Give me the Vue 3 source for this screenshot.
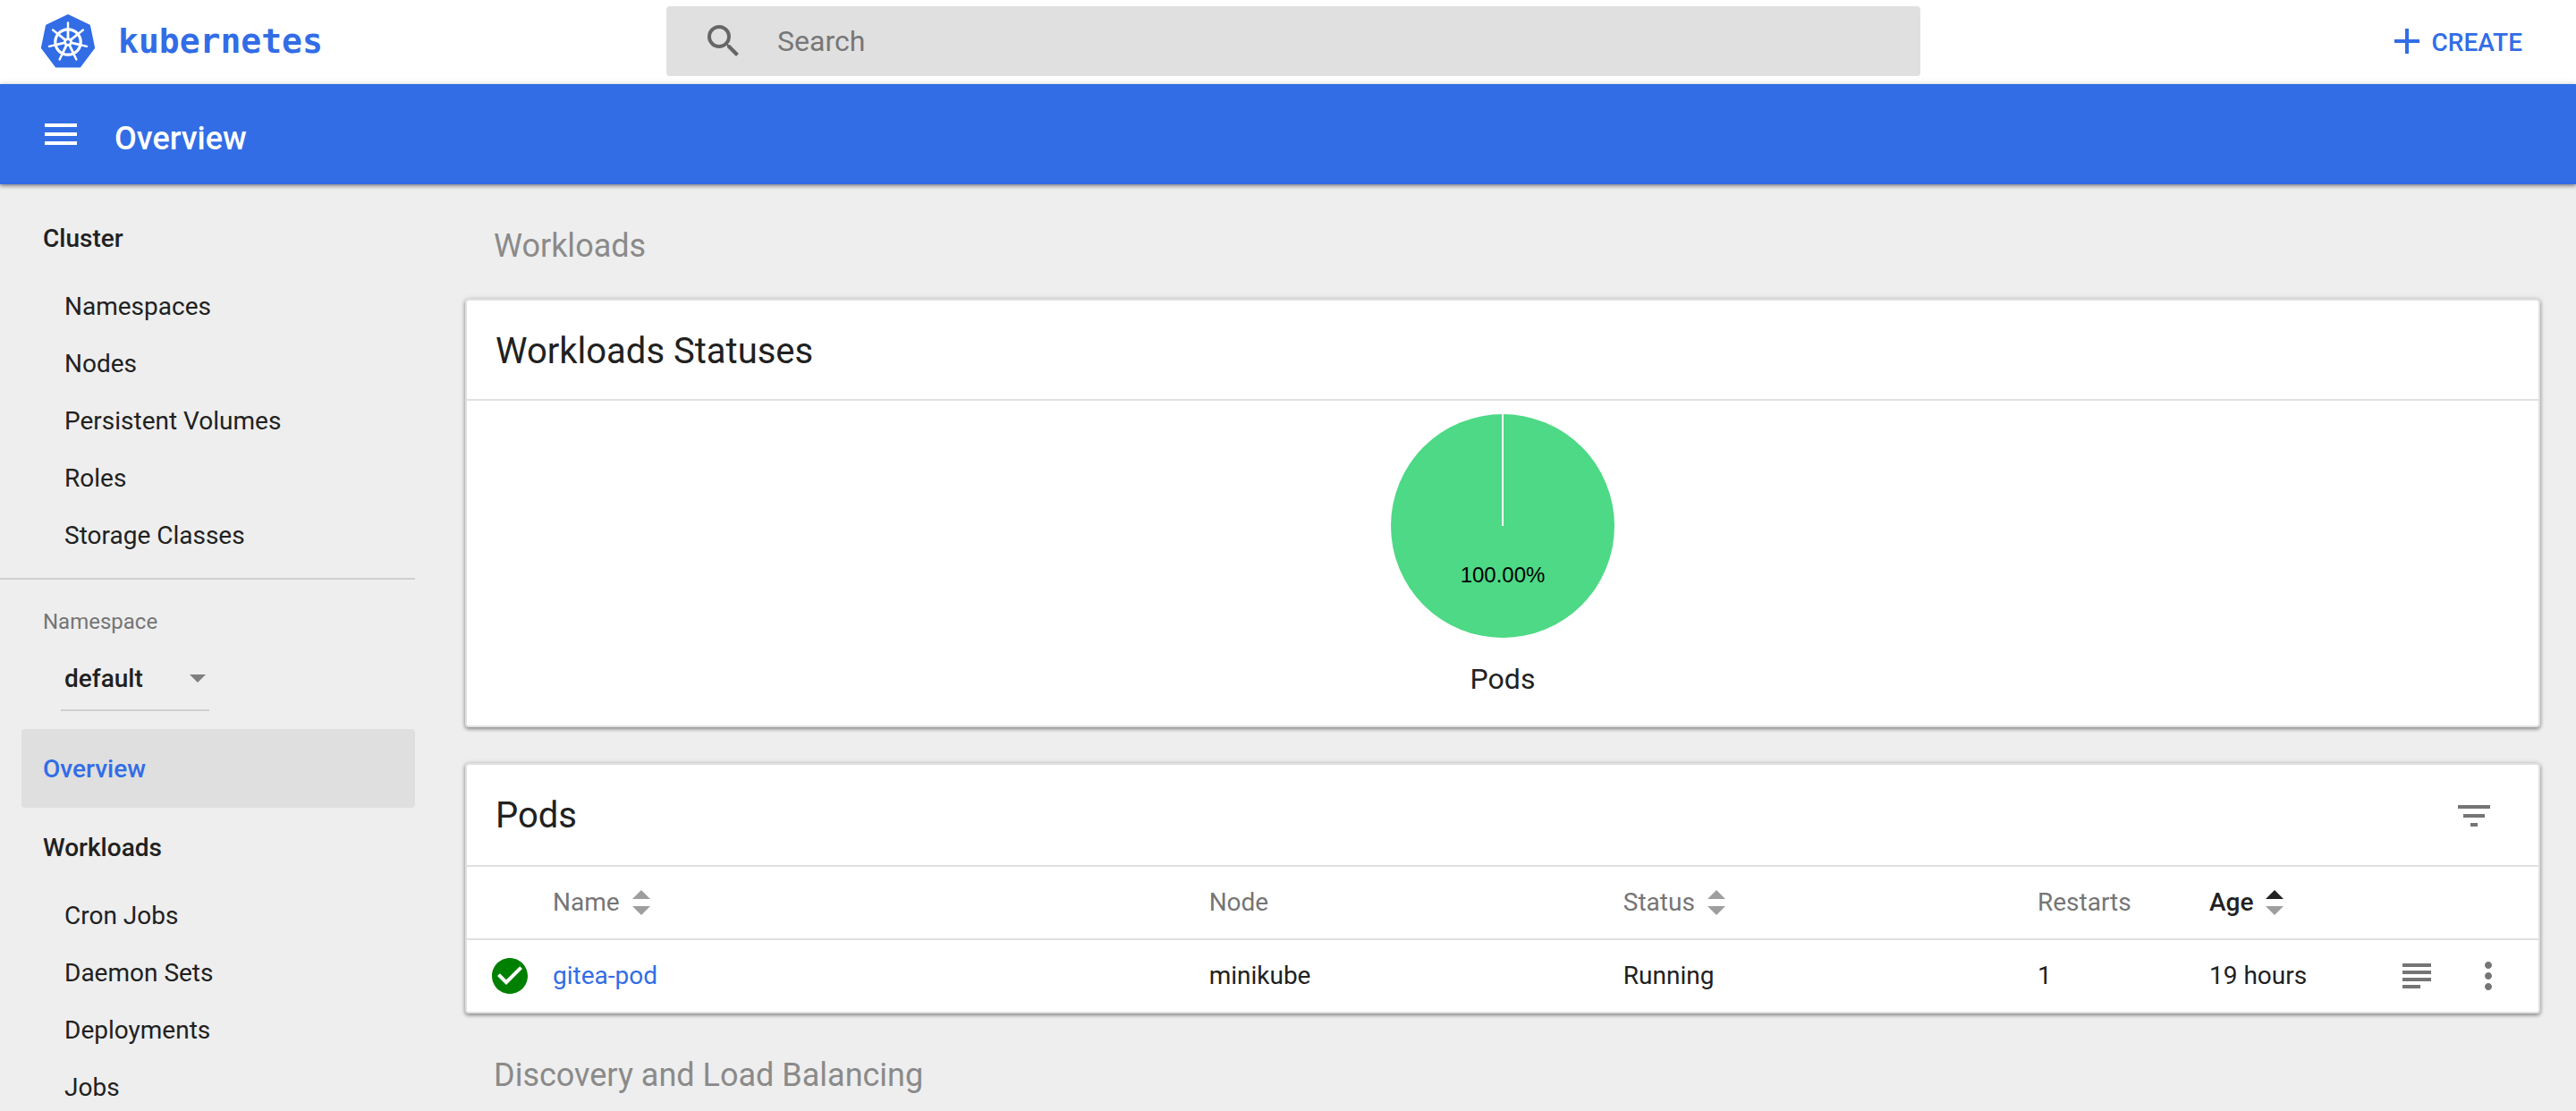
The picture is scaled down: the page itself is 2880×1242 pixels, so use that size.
<script setup>
import { ref } from 'vue'

const clusterItems = ['Namespaces', 'Nodes', 'Persistent Volumes', 'Roles', 'Storage Classes']
const workloadItems = ['Cron Jobs', 'Daemon Sets', 'Deployments', 'Jobs']
const namespace = ref('default')
const query = ref('')
const pods = [{ name: 'gitea-pod', node: 'minikube', status: 'Running', restarts: 1, age: '19 hours' }]

// One spoke of the wheel for each side of the heptagon
const spokes = Array.from({ length: 7 }, (_, i) => (i * 360) / 7)
</script>

<template>
  <div class="app">
    <header class="top">
      <a class="brand" href="#">
        <svg class="logo" viewBox="0 0 60 60" aria-hidden="true">
          <path
            d="M30 1.5 L53.5 12.8 L58.6 37.3 L43 58 L17 58 L1.4 37.3 L6.5 12.8 Z"
            fill="#326de6" stroke="#326de6" stroke-width="3" stroke-linejoin="round"
          />
          <g fill="none" stroke="#fff">
            <circle cx="30" cy="31" r="14.2" stroke-width="3.2" />
            <g v-for="a in spokes" :key="a" :transform="`rotate(${a} 30 31)`">
              <path d="M30 9.4V17" stroke-width="2.4" stroke-linecap="round" />
              <path d="M30 17V28" stroke-width="2.8" />
            </g>
          </g>
          <circle cx="30" cy="31" r="4.8" fill="#fff" />
          <circle cx="30" cy="31" r="2" fill="#326de6" />
        </svg>
        <span class="wordmark">kubernetes</span>
      </a>
      <label class="search">
        <svg class="icon" viewBox="0 0 24 24" aria-hidden="true">
          <path d="M15.5 14h-.79l-.28-.27A6.47 6.47 0 0 0 16 9.5 6.5 6.5 0 1 0 9.5 16c1.61 0 3.09-.59 4.23-1.57l.27.28v.79l5 4.99L20.49 19l-4.99-5zm-6 0C7.01 14 5 11.99 5 9.5S7.01 5 9.5 5 14 7.01 14 9.5 11.99 14 9.5 14z" />
        </svg>
        <input v-model="query" type="text" placeholder="Search" aria-label="Search" />
      </label>
      <button class="create" type="button">
        <svg class="icon" viewBox="0 0 24 24" aria-hidden="true"><path d="M19 13h-6v6h-2v-6H5v-2h6V5h2v6h6v2z" /></svg>
        <span>CREATE</span>
      </button>
    </header>

    <div class="bar">
      <button class="icon-button" type="button" aria-label="Toggle navigation">
        <svg class="icon" viewBox="0 0 24 24" aria-hidden="true"><path d="M3 18h18v-2H3v2zm0-5h18v-2H3v2zm0-7v2h18V6H3z" /></svg>
      </button>
      <h1>Overview</h1>
    </div>

    <div class="body">
      <nav class="side">
        <a class="group" href="#">Cluster</a>
        <a v-for="item in clusterItems" :key="item" class="item" href="#">{{ item }}</a>
        <div class="namespace">
          <label for="namespace">Namespace</label>
          <div class="select">
            <select id="namespace" v-model="namespace">
              <option>default</option>
            </select>
            <svg class="caret" viewBox="0 0 18 9" aria-hidden="true"><path d="M0 0h18L9 9z" /></svg>
          </div>
        </div>
        <a class="group active" href="#">Overview</a>
        <a class="group" href="#">Workloads</a>
        <a v-for="item in workloadItems" :key="item" class="item" href="#">{{ item }}</a>
      </nav>

      <main class="content">
        <h2 class="section">Workloads</h2>
        <section class="card">
          <div class="card-head"><h3>Workloads Statuses</h3></div>
          <figure class="chart">
            <svg viewBox="0 0 250 250" aria-hidden="true">
              <circle cx="125" cy="125" r="125" fill="#4dd985" />
              <path d="M125 0V125" stroke="#fff" stroke-width="2" />
              <text x="125" y="188" text-anchor="middle">100.00%</text>
            </svg>
            <figcaption>Pods</figcaption>
          </figure>
        </section>

        <section class="card">
          <div class="card-head with-tools">
            <h3>Pods</h3>
            <button class="icon-button" type="button" aria-label="Filter">
              <svg class="icon" viewBox="0 0 24 24" aria-hidden="true"><path d="M10 18h4v-2h-4v2zM3 6v2h18V6H3zm3 7h12v-2H6v2z" /></svg>
            </button>
          </div>
          <table>
            <colgroup>
              <col class="c-state" />
              <col />
              <col class="c-wide" />
              <col class="c-wide" />
              <col class="c-narrow" />
              <col class="c-narrow" />
              <col class="c-actions" />
            </colgroup>
            <thead>
              <tr>
                <th></th>
                <th>
                  <button class="sort" type="button">Name
                    <svg viewBox="0 0 20 28" aria-hidden="true"><path d="M0 10L10 0L20 10z" /><path d="M0 18H20L10 28z" /></svg>
                  </button>
                </th>
                <th>Node</th>
                <th>
                  <button class="sort" type="button">Status
                    <svg viewBox="0 0 20 28" aria-hidden="true"><path d="M0 10L10 0L20 10z" /><path d="M0 18H20L10 28z" /></svg>
                  </button>
                </th>
                <th>Restarts</th>
                <th>
                  <button class="sort sorted" type="button">Age
                    <svg viewBox="0 0 20 28" aria-hidden="true"><path class="on" d="M0 10L10 0L20 10z" /><path d="M0 18H20L10 28z" /></svg>
                  </button>
                </th>
                <th></th>
              </tr>
            </thead>
            <tbody>
              <tr v-for="pod in pods" :key="pod.name">
                <td class="state">
                  <svg class="icon ok" viewBox="0 0 24 24" aria-label="Ready"><path d="M12 2C6.48 2 2 6.48 2 12s4.48 10 10 10 10-4.48 10-10S17.52 2 12 2zm-2 15l-5-5 1.41-1.41L10 14.17l7.59-7.59L19 8l-9 9z" /></svg>
                </td>
                <td><a href="#">{{ pod.name }}</a></td>
                <td>{{ pod.node }}</td>
                <td>{{ pod.status }}</td>
                <td>{{ pod.restarts }}</td>
                <td>{{ pod.age }}</td>
                <td>
                  <div class="actions">
                    <button class="icon-button" type="button" aria-label="Logs">
                      <svg class="icon" viewBox="0 0 24 24" aria-hidden="true"><path d="M14 17H4v2h10v-2zm6-8H4v2h16V9zM4 15h16v-2H4v2zM4 5v2h16V5H4z" /></svg>
                    </button>
                    <button class="icon-button" type="button" aria-label="More actions">
                      <svg class="icon" viewBox="0 0 24 24" aria-hidden="true"><path d="M12 8c1.1 0 2-.9 2-2s-.9-2-2-2-2 .9-2 2 .9 2 2 2zm0 2c-1.1 0-2 .9-2 2s.9 2 2 2 2-.9 2-2-.9-2-2-2zm0 6c-1.1 0-2 .9-2 2s.9 2 2 2 2-.9 2-2-.9-2-2-2z" /></svg>
                    </button>
                  </div>
                </td>
              </tr>
            </tbody>
          </table>
        </section>
        <h2 class="section">Discovery and Load Balancing</h2>
      </main>
    </div>
  </div>
</template>

<style>
body {
  margin: 0;
  background: #eee;
}
</style>

<style scoped>
.app {
  display: flex;
  flex-direction: column;
  height: 100vh;
  overflow: hidden;
  font: 400 28px/40px Roboto, sans-serif;
  color: #212121;
}

a {
  color: inherit;
  text-decoration: none;
}

h1,
h2,
h3,
figure {
  margin: 0;
  font-weight: 400;
}

button {
  display: flex;
  align-items: center;
  padding: 0;
  border: 0;
  background: none;
  color: inherit;
  font: inherit;
}

.icon {
  display: block;
  width: 48px;
  height: 48px;
  flex: none;
  fill: currentColor;
}

.top {
  display: grid;
  grid-template-columns: 699px 1fr 673px;
  align-items: center;
  flex: none;
  height: 94px;
  padding: 0 60px 2px 46px;
  box-sizing: border-box;
  background: #fff;
}

.brand {
  display: flex;
  align-items: center;
  gap: 26px;
  color: #326de6;
}

.logo {
  width: 60px;
  height: 60px;
}

.wordmark {
  font: 700 38px/48px "DejaVu Sans Mono", monospace;
}

.search {
  display: flex;
  align-items: center;
  gap: 36px;
  height: 78px;
  padding: 0 40px;
  border-radius: 4px;
  background: #e0e0e0;
  color: #666;
}

.search input {
  flex: 1;
  min-width: 0;
  padding: 0;
  border: 0;
  outline: 0;
  background: none;
  color: #212121;
  font: 400 32px/40px Roboto, sans-serif;
}

.search input::placeholder {
  color: #777;
}

.create {
  justify-self: end;
  align-items: flex-start;
  gap: 4px;
  color: #326de6;
  font-weight: 500;
}

.create span {
  padding-top: 6px;
}

.bar {
  display: flex;
  align-items: center;
  flex: none;
  position: relative;
  gap: 36px;
  height: 112px;
  padding: 0 44px;
  box-sizing: border-box;
  background: #326de6;
  color: #fff;
  box-shadow: 0 2px 4px rgba(0, 0, 0, 0.4), 0 0 8px rgba(0, 0, 0, 0.12);
}

.bar h1 {
  padding-top: 10px;
  font-size: 36px;
  font-weight: 500;
}

.body {
  display: flex;
  flex: 1;
  min-height: 0;
  gap: 56px;
  padding-right: 40px;
}

.side {
  flex: none;
  width: 464px;
  padding-top: 16px;
}

.group {
  display: block;
  margin-left: 24px;
  padding: 25px 24px 23px;
  border-radius: 4px;
  font-weight: 500;
}

.active {
  background: #dfdfdf;
  color: #326de6;
}

.item {
  display: block;
  padding: 13px 72px 11px;
}

.namespace {
  margin-top: 16px;
  padding: 27px 48px 20px;
  border-top: 2px solid #cfcfcf;
}

.namespace label {
  display: block;
  color: #757575;
  font-size: 24px;
}

.select {
  display: flex;
  align-items: center;
  position: relative;
  width: 166px;
  margin: 8px 0 0 20px;
  border-bottom: 2px solid #cfcfcf;
}

.select select {
  width: 100%;
  height: 70px;
  padding: 2px 4px 0;
  border: 0;
  appearance: none;
  background: none;
  color: inherit;
  font: inherit;
  font-weight: 500;
}

.caret {
  position: absolute;
  right: 4px;
  width: 18px;
  height: 9px;
  fill: #7f7f7f;
  pointer-events: none;
}

.content {
  flex: 1;
  min-width: 0;
}

.section {
  padding: 49px 32px 39px;
  color: #8a8a8a;
  font-size: 36px;
}

.card {
  border: 2px solid #e0e0e0;
  border-radius: 4px;
  background: #fff;
  box-shadow: 0 2px 4px rgba(0, 0, 0, 0.4), 0 0 6px rgba(0, 0, 0, 0.12);
}

.card + .card {
  margin-top: 40px;
}

.card-head {
  display: flex;
  align-items: center;
  justify-content: space-between;
  min-height: 48px;
  padding: 33px 48px 29px 32px;
  border-bottom: 2px solid #e0e0e0;
}

.card-head.with-tools {
  padding-bottom: 31px;
}

.card-head h3 {
  font-size: 40px;
  line-height: 48px;
}

.chart {
  display: flex;
  flex-direction: column;
  align-items: center;
  gap: 26px;
  padding: 15px 0 32px;
}

.chart svg {
  display: block;
  width: 250px;
  height: 250px;
}

.chart text {
  font: 400 24px "Liberation Sans", sans-serif;
  fill: #000;
}

.chart figcaption {
  font-size: 32px;
}

table {
  width: 100%;
  table-layout: fixed;
  border-collapse: separate;
  border-spacing: 0;
}

.c-state {
  width: 96px;
}

.c-wide {
  width: 20%;
}

.c-narrow {
  width: 192px;
}

.c-actions {
  width: 176px;
}

th,
td {
  height: 80px;
  padding: 0;
  text-align: left;
  font-weight: 400;
  white-space: nowrap;
}

th {
  color: #757575;
  border-bottom: 2px solid #e0e0e0;
}

td a {
  color: #326de6;
}

.state {
  padding-left: 24px;
}

.ok {
  color: #008000;
}

.sort {
  gap: 14px;
}

.sort svg {
  width: 20px;
  height: 28px;
  fill: #9e9e9e;
}

.sort .on {
  fill: #212121;
}

.sorted {
  color: #212121;
  font-weight: 500;
}

.card .icon-button {
  color: #757575;
}

.actions {
  display: flex;
  justify-content: flex-end;
  gap: 32px;
  padding-right: 32px;
}
</style>
